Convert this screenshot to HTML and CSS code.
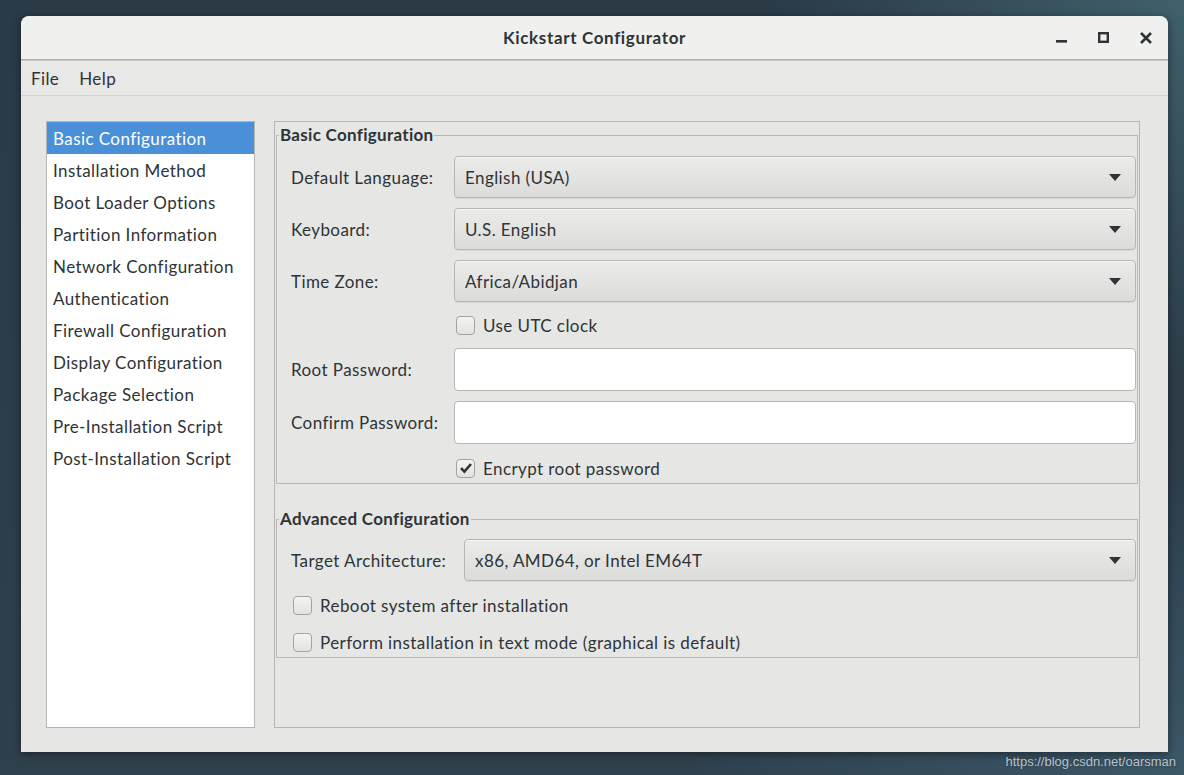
FILE: index.html
```html
<!DOCTYPE html>
<html>
<head>
<meta charset="utf-8">
<title>Kickstart Configurator</title>
<link rel="stylesheet" href="styles.css">
</head>
<body>
<div class="desktop">
  <div class="window">
    <div class="titlebar">
      <div class="tb-side"></div>
      <div class="tb-title">Kickstart Configurator</div>
      <div class="tb-side tb-controls">
        <svg class="ctl" width="14" height="14" viewBox="0 0 14 14"><rect x="1" y="9" width="11" height="2.6" fill="#2e3436"/></svg>
        <svg class="ctl" width="14" height="14" viewBox="0 0 14 14"><rect x="2.2" y="2.2" width="8.6" height="8.6" fill="none" stroke="#2e3436" stroke-width="2.4"/></svg>
        <svg class="ctl" width="14" height="14" viewBox="0 0 14 14"><path d="M2 2 L12 12 M12 2 L2 12" stroke="#2e3436" stroke-width="2.6" fill="none"/></svg>
      </div>
    </div>
    <div class="menubar">
      <span class="menu-item">File</span>
      <span class="menu-item">Help</span>
    </div>
    <div class="content">
      <ul class="sidebar">
        <li class="selected">Basic Configuration</li>
        <li>Installation Method</li>
        <li>Boot Loader Options</li>
        <li>Partition Information</li>
        <li>Network Configuration</li>
        <li>Authentication</li>
        <li>Firewall Configuration</li>
        <li>Display Configuration</li>
        <li>Package Selection</li>
        <li>Pre-Installation Script</li>
        <li>Post-Installation Script</li>
      </ul>
      <div class="panel">
        <fieldset class="group basic">
          <legend>Basic Configuration</legend>
          <div class="form basic-form">
            <label class="lbl">Default Language:</label>
            <div class="combo"><span>English (USA)</span><i class="arrow"></i></div>
            <label class="lbl">Keyboard:</label>
            <div class="combo"><span>U.S. English</span><i class="arrow"></i></div>
            <label class="lbl">Time Zone:</label>
            <div class="combo"><span>Africa/Abidjan</span><i class="arrow"></i></div>
            <div></div>
            <div class="check"><span class="box"></span><span>Use UTC clock</span></div>
            <label class="lbl">Root Password:</label>
            <div class="entry"></div>
            <label class="lbl">Confirm Password:</label>
            <div class="entry"></div>
            <div></div>
            <div class="check"><span class="box checked"><svg width="14" height="14" viewBox="0 0 14 14"><path d="M2 7.2 L5.4 10.6 L12 3" fill="none" stroke="#2e3436" stroke-width="2.6"/></svg></span><span>Encrypt root password</span></div>
          </div>
        </fieldset>
        <fieldset class="group advanced">
          <legend>Advanced Configuration</legend>
          <div class="form adv-form">
            <label class="lbl">Target Architecture:</label>
            <div class="combo"><span>x86, AMD64, or Intel EM64T</span><i class="arrow"></i></div>
            <div class="check full"><span class="box"></span><span>Reboot system after installation</span></div>
            <div class="check full"><span class="box"></span><span>Perform installation in text mode (graphical is default)</span></div>
          </div>
        </fieldset>
      </div>
    </div>
  </div>
  <div class="watermark">https://blog.csdn.net/oarsman</div>
</div>
</body>
</html>
```

FILE: styles.css
```css
html, body {
  margin: 0;
  padding: 0;
}
body {
  width: 1184px;
  height: 775px;
  overflow: hidden;
  font-family: Lato, "Open Sans", sans-serif;
  color: #2e3436;
}
.desktop {
  position: relative;
  width: 1184px;
  height: 775px;
  padding: 16px 0 0 21px;
  box-sizing: border-box;
  background:
    radial-gradient(ellipse 420px 380px at 1184px 0px, #3f606b 0%, rgba(63,96,107,0) 100%),
    radial-gradient(ellipse 500px 300px at 1184px 775px, #3b5768 0%, rgba(59,87,104,0) 100%),
    linear-gradient(180deg, #2a3a47 0%, #2c3c49 50%, #2f404d 100%);
}
.window {
  width: 1147px;
  height: 736px;
  border-radius: 8px 8px 0 0;
  background: #e6e6e4;
  box-shadow: 0 2px 8px rgba(0,0,0,0.45);
  display: flex;
  flex-direction: column;
  overflow: hidden;
}
.titlebar {
  height: 44px;
  flex: none;
  background: #f0f0ef;
  border-bottom: 1px solid #aeaeab;
  display: grid;
  grid-template-columns: 1fr auto 1fr;
  align-items: center;
  box-sizing: border-box;
  border-radius: 8px 8px 0 0;
}
.tb-title {
  font-weight: 700;
  font-size: 17px;
  padding-top: 0;
  letter-spacing: 0.65px;
}
.tb-controls {
  display: flex;
  justify-content: flex-end;
  gap: 28px;
  padding-right: 15px;
  padding-top: 1px;
}
.ctl { display: block; }
.menubar {
  height: 36px;
  flex: none;
  box-sizing: border-box;
  background: #e8e8e7;
  border-top: 1px solid #c9c9c6;
  border-bottom: 1px solid #d2d2cf;
  display: flex;
  align-items: center;
  padding: 0 0 0 10px;
  gap: 20px;
  font-size: 17px;
  letter-spacing: 0.4px;
}
.content {
  flex: 1;
  display: flex;
  padding: 25px 28px 24px 25px;
  gap: 19px;
  min-height: 0;
  font-size: 17px;
  letter-spacing: 0.42px;
}
.sidebar {
  list-style: none;
  margin: 0;
  padding: 0;
  width: 209px;
  flex: none;
  box-sizing: border-box;
  background: #ffffff;
  border: 1px solid #b5b5b2;
}
.sidebar li {
  height: 32px;
  line-height: 34px;
  padding-left: 6px;
  white-space: nowrap;
}
.sidebar li.selected {
  background: #4a90d9;
  color: #ffffff;
}
.panel {
  flex: 1;
  box-sizing: border-box;
  border: 1px solid #b5b5b2;
  padding: 0 1px;
}
.group {
  margin: 0;
  padding: 0;
  border: 1px solid #b9b9b6;
  min-width: 0;
}
.group.basic {
  margin-top: 2px;
}
.group legend {
  font-weight: 700;
  font-size: 17px;
  line-height: 22px;
  padding: 0 1px;
  margin-left: 2px;
  letter-spacing: 0.3px;
}
.group.advanced {
  margin-top: 24px;
}
.form {
  display: grid;
  align-items: center;
  row-gap: 10px;
  padding: 10px 1px 1px 14px;
}
.basic-form {
  grid-template-columns: 163px 1fr;
  grid-template-rows: 42px 42px 42px 26px 43px 43px 28px;
}
.adv-form {
  grid-template-columns: 173px 1fr;
  grid-template-rows: 42px 26px 26px;
  row-gap: 11px;
  padding-top: 9px;
  padding-bottom: 2px;
}
.lbl { white-space: nowrap; }
.combo {
  height: 42px;
  box-sizing: border-box;
  border: 1px solid #b6b6b3;
  border-radius: 4px;
  background: linear-gradient(#ebebea, #dcdcda);
  box-shadow: inset 0 1px 0 rgba(255,255,255,0.6), 0 1px 0 rgba(0,0,0,0.06);
  display: flex;
  align-items: center;
  justify-content: space-between;
  padding: 0 14px 0 10px;
}
.arrow {
  width: 0;
  height: 0;
  border-left: 6px solid transparent;
  border-right: 6px solid transparent;
  border-top: 7px solid #2e3436;
}
.entry {
  height: 43px;
  box-sizing: border-box;
  background: #ffffff;
  border: 1px solid #b6b6b3;
  border-radius: 4px;
}
.check {
  display: flex;
  align-items: center;
  gap: 8px;
  padding-left: 2px;
}
.check.full { grid-column: 1 / 3; }
.box {
  width: 19px;
  height: 19px;
  box-sizing: border-box;
  border: 1px solid #a3a3a0;
  border-radius: 4px;
  background: linear-gradient(#f4f4f3, #e2e2e0);
  display: flex;
  align-items: center;
  justify-content: center;
}
.box svg { display: block; }
.watermark {
  position: absolute;
  right: 8px;
  bottom: 6px;
  font-family: "Liberation Sans", Arial, sans-serif;
  font-size: 13px;
  color: rgba(235,240,245,0.75);
  text-shadow: 0 0 2px rgba(0,0,0,0.4);
}
```
